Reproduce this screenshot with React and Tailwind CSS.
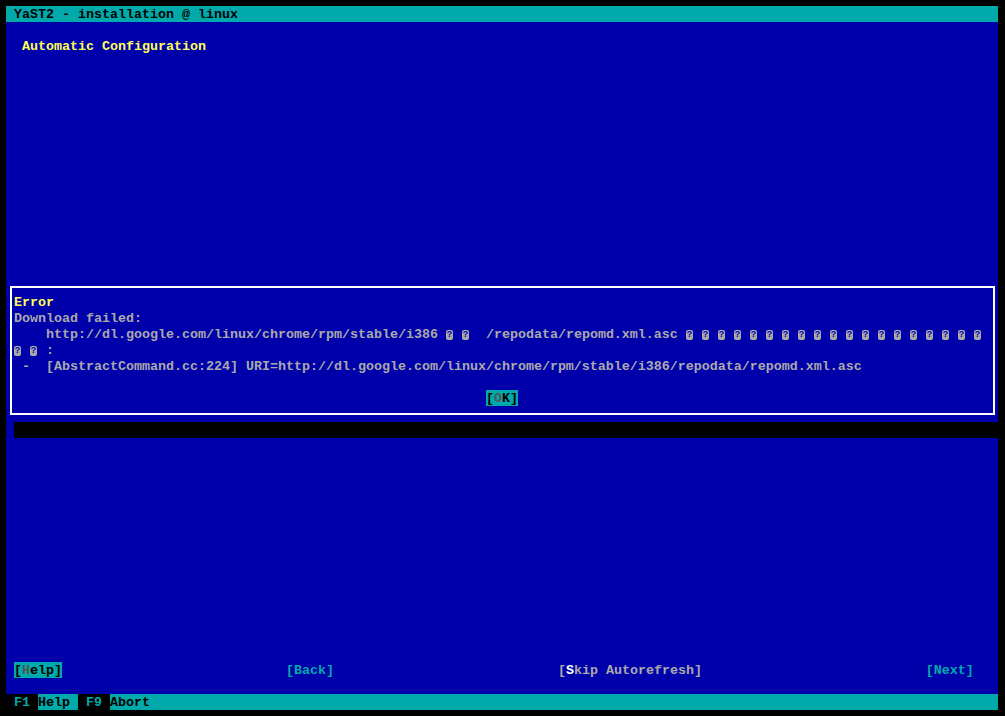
const BLUE = "bg-[#0000aa]";

// replacement glyph for bytes the console can't show
function Bad() {
  return (
    <span className="inline-flex h-4 w-2 items-start pt-[4px] align-top">
      <span className="flex h-[10px] w-[7px] items-center justify-center rounded-[2px] bg-[#aaaaaa] text-[9px] font-bold leading-[10px] text-[#0000aa]">
        ?
      </span>
    </span>
  );
}

// a coloured cell run that fills the whole 16px cell height
function Cell({ children, className = "" }) {
  return <span className={`inline-block h-4 align-top leading-[18px] ${className}`}>{children}</span>;
}

function Row({ children, className = "" }) {
  return <div className={`h-4 whitespace-pre leading-[18px] ${className}`}>{children}</div>;
}

export default function App() {
  const tail = Array.from({ length: 19 });

  return (
    <div className="h-[716px] w-[1005px] bg-black pl-[6px] pt-[6px] font-['Liberation_Mono',monospace] text-[13.3334px] font-bold text-[#aaaaaa]">
      <div className="flex w-[992px] flex-col">
        {/* title bar */}
        <Row className="bg-[#00aaaa] text-black">{" YaST2 - installation @ linux"}</Row>

        {/* main area */}
        <div className={`flex h-[672px] flex-col ${BLUE}`}>
          <Row />
          <Row className="text-[#ffff55]">{"  Automatic Configuration"}</Row>
          <div className="h-[224px]" />

          {/* error popup */}
          <div className={`h-[144px] pb-[7px] pl-[4px] pr-[3px] pt-[8px] ${BLUE}`}>
            <div className="h-[129px] border-2 border-white pl-[2px] pt-[6px]">
              <Row className="text-[#ffff55]">Error</Row>
              <Row>Download failed:</Row>
              <Row>
                {"    http://dl.google.com/linux/chrome/rpm/stable/i386 "}
                <Bad />
                {" "}
                <Bad />
                {"  /repodata/repomd.xml.asc "}
                {tail.map((_, i) => (
                  <span key={i}>
                    <Bad />
                    {" "}
                  </span>
                ))}
              </Row>
              <Row>
                <Bad />
                {" "}
                <Bad />
                {" :"}
              </Row>
              <Row>{" -  [AbstractCommand.cc:224] URI=http://dl.google.com/linux/chrome/rpm/stable/i386/repodata/repomd.xml.asc"}</Row>
              <Row />
              <Row>
                {" ".repeat(59)}
                <Cell className="bg-[#00aaaa] text-black">
                  [<span className="text-[#555555]">O</span>K]
                </Cell>
              </Row>
            </div>
          </div>
          {/* popup shadow */}
          <div className="flex h-4">
            <div className="w-2" />
            <div className="flex-1 bg-black" />
          </div>

          <div className="flex-1" />

          {/* buttons */}
          <Row>
            {" "}
            <Cell className="bg-[#00aaaa] text-black">
              [<span className="text-[#555555]">H</span>elp]
            </Cell>
            {" ".repeat(28)}
            <span className="text-[#00aaaa]">[Back]</span>
            {" ".repeat(28)}
            <span>
              [<span className="text-white">S</span>kip Autorefresh]
            </span>
            {" ".repeat(28)}
            <span className="text-[#00aaaa]">[Next]</span>
          </Row>
          <Row />
        </div>

        {/* function key bar */}
        <Row className="bg-[#00aaaa] text-black">
          <Cell className="bg-black text-[#00aaaa]">{" F1 "}</Cell>
          {"Help "}
          <Cell className="bg-black text-[#00aaaa]">{" F9 "}</Cell>
          {"Abort"}
        </Row>
      </div>
    </div>
  );
}
